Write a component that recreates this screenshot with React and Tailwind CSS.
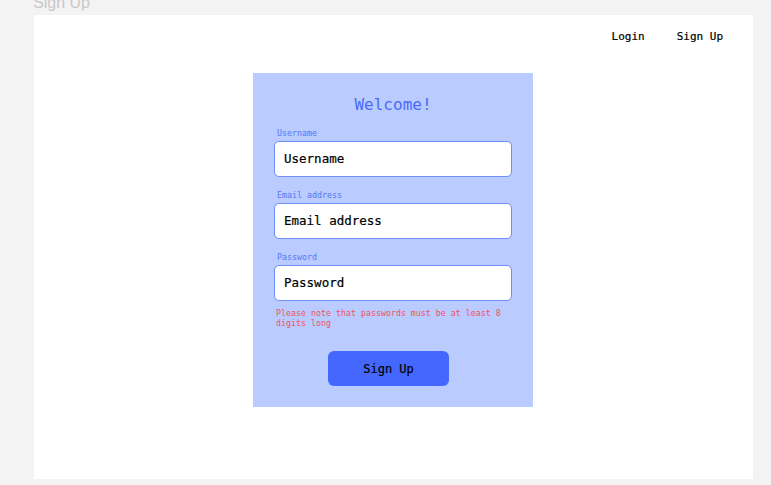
export default function App() {
  const mono = { fontFamily: '"DejaVu Sans Mono", monospace' };
  return (
    <div className="w-[771px] h-[485px] bg-[#f3f3f3] overflow-hidden relative" style={mono}>
      <div className="h-[15px] relative">
        <div className="absolute left-[33px] top-[-7px] text-[16px] leading-[20px] text-[#c9c9c9]" style={{ fontFamily: '"Liberation Sans", Arial, sans-serif' }}>Sign Up</div>
      </div>
      <div className="ml-[34px] w-[719px] h-[464px] bg-white flex flex-col">
        <div className="flex justify-end h-[58px] pt-[15px] pr-[30px] gap-[32px] text-[11px] leading-[14px] text-black [-webkit-text-stroke:0.2px_black]">
          <span>Login</span>
          <span>Sign Up</span>
        </div>
        <div className="ml-[219px] w-[280px] h-[334px] bg-[#b9cbff] flex flex-col px-[21px]">
          <div className="pt-[22px] h-[55px] text-center text-[16px] leading-[20px] text-[#4a6cf8]">Welcome!</div>
          <Field label="Username" first />
          <Field label="Email address" />
          <Field label="Password" />
          <div className="mt-[7px] ml-[2px] text-[8.3px] leading-[10px] text-[#f2525c]">Please note that passwords must be at least 8 digits long</div>
          <div className="flex justify-center mt-[23px] pr-[9px]">
            <button className="w-[121px] h-[35px] bg-[#4468fd] rounded-[6px] text-[12px] text-black [-webkit-text-stroke:0.2px_black]" style={mono}>Sign Up</button>
          </div>
        </div>
      </div>
    </div>
  );
}

function Field({ label, first }) {
  return (
    <div className={first ? "flex flex-col" : "flex flex-col mt-[13px]"}>
      <div className="ml-[3px] text-[8.3px] leading-[10px] text-[#5577f7] mb-[3px]">{label}</div>
      <div className="w-[238px] h-[36px] bg-white border border-[#6f8cf8] rounded-[5px] flex items-center pl-[9px] text-[12.5px] text-black [-webkit-text-stroke:0.2px_black]">{label}</div>
    </div>
  );
}
